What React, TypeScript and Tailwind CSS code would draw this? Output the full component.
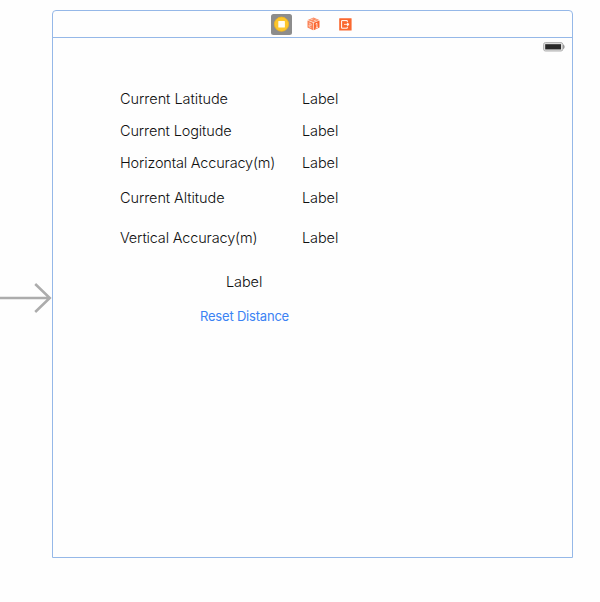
const rows = [
  { name: 'Current Latitude', height: 'h-8', spacing: 'tracking-[-0.04px]' },
  { name: 'Current Logitude', height: 'h-8', spacing: 'tracking-[-0.13px]' },
  { name: 'Horizontal Accuracy(m)', height: 'h-8', spacing: 'tracking-[-0.17px]' },
  { name: 'Current Altitude', height: 'h-[38px]', spacing: 'tracking-[-0.09px]' },
  { name: 'Vertical Accuracy(m)', height: 'h-[42px]', spacing: 'tracking-[-0.16px]' },
];

function ControllerIcon() {
  return (
    <svg width="21" height="21" viewBox="0 0 21 21">
      <rect width="21" height="21" rx="2.5" fill="#8c8c8c" />
      <circle cx="10.5" cy="10.2" r="7.1" fill="#fdc62b" stroke="#f3b51c" strokeWidth="0.8" />
      <rect x="7.3" y="7" width="6.6" height="6.6" rx="0.5" fill="#fffdf5" />
    </svg>
  );
}

function ResponderIcon() {
  return (
    <svg width="13" height="14" viewBox="0 0 13 14">
      <path d="M6.5 .5 12.3 3 6.5 5.2.7 3Z" fill="#fb8b61" />
      <path d="M.5 3.5 6.1 5.7V13.2L.5 10.6Z" fill="#fa8054" />
      <path d="M6.7 5.7 12.5 3.5V10.6L6.7 13.2Z" fill="#fa6630" />
      <path d="m3.5 2.8 2.8-.9m.5 1.9 2.8-1M1.8 6l2.4 1v1.6L2 7.9v1.7l2.3 1" fill="none" stroke="#fff0e8" strokeWidth=".6" />
      <path d="m8.6 7.1 1.3-.8v4.3m-1.3.6 2.5-1.1" fill="none" stroke="#fff" strokeWidth=".8" />
    </svg>
  );
}

function ExitIcon() {
  return (
    <svg width="13" height="13" viewBox="0 0 13 13">
      <rect x=".2" y=".2" width="12.4" height="12.4" rx=".4" fill="#fa6830" />
      <path d="M8.3 4V2.6H2.6v7.6h5.7V8.8" fill="none" stroke="#fff" strokeWidth="1" />
      <path d="M5 6.4h4.2M8.4 5l1.7 1.4-1.7 1.4Z" fill="#fff" stroke="#fff" strokeWidth=".8" />
    </svg>
  );
}

function BatteryIcon() {
  return (
    <svg width="22" height="10" viewBox="0 0 22 10">
      <rect x=".6" y=".6" width="19.2" height="8.4" rx="1.8" fill="#e0e0e0" stroke="#b0b0b0" />
      <path d="M20 2.4c2.2.5 2.2 4.2 0 4.7Z" fill="#999" />
      <rect x="2.2" y="2.2" width="15.8" height="5.2" fill="#292929" />
    </svg>
  );
}

export default function App() {
  return (
    <div className="flex h-[602px] w-[600px] overflow-hidden bg-[#fefefe] font-['Inter','Liberation_Sans',sans-serif] text-[14.5px] font-light text-[#101010]">
      <div className="w-[52px] shrink-0 pt-[282px]">
        <svg width="52" height="32" viewBox="0 0 52 32" fill="none" stroke="#acacac" strokeWidth="2.5">
          <path d="M0 16H49M35.2 2 49.8 16 35.2 30" />
        </svg>
      </div>
      <main className="mt-[10px] flex h-[548px] w-[521px] shrink-0 flex-col rounded-t-[4px] border border-[#95b8e8]">
        <header className="flex h-[27px] shrink-0 items-center border-b border-[#95b8e8] pl-[218px]">
          <ControllerIcon />
          <div className="ml-[15px]"><ResponderIcon /></div>
          <div className="ml-[19px]"><ExitIcon /></div>
        </header>
        <div className="flex h-[45px] shrink-0 justify-end pt-1 pr-[7px]"><BatteryIcon /></div>
        <section className="pl-[67px] leading-5">
          {rows.map((row) => (
            <div key={row.name} className={`flex items-center ${row.height}`}>
              <span className={`w-[182px] whitespace-nowrap ${row.spacing}`}>{row.name}</span>
              <span className="tracking-[-0.1px]">Label</span>
            </div>
          ))}
        </section>
        <div className="mt-[13px] pl-[173px] leading-5 tracking-[-0.1px]">Label</div>
        <button className="mt-[14px] ml-[147px] self-start text-[13px] leading-5 font-normal tracking-[-0.2px] text-[#3b82f4]">Reset Distance</button>
      </main>
    </div>
  );
}
